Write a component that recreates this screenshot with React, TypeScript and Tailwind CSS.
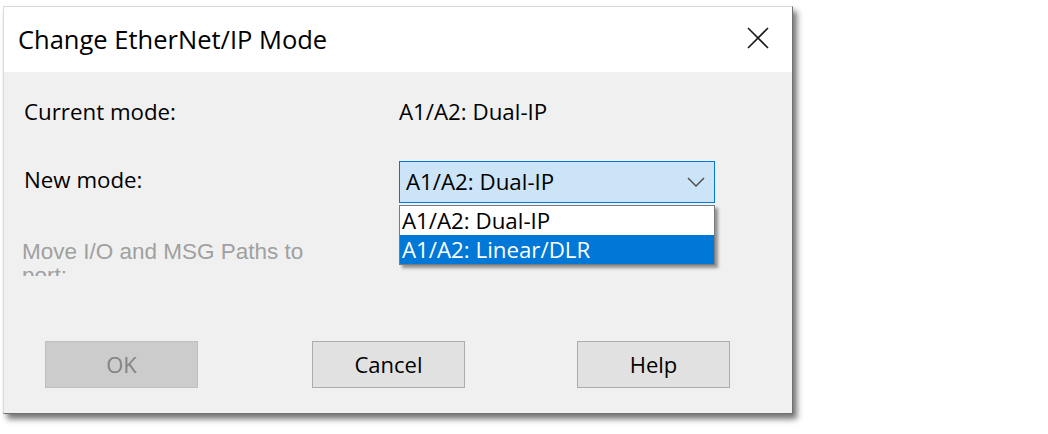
import React from 'react'

// ── Small drawings ──────────────────────────────────────────

function CloseIcon() {
  return (
    <svg width="22" height="22" viewBox="0 0 22 22" className="block -mt-[3px]">
      <path d="M1 1 L21 21 M21 1 L1 21" stroke="#1a1a1a" strokeWidth="1.6" fill="none" />
    </svg>
  )
}

function Chevron() {
  return (
    <svg width="18" height="10" viewBox="0 0 18 10" className="block">
      <path d="M1 1 L9 9 L17 1" stroke="#505050" strokeWidth="1.5" fill="none" />
    </svg>
  )
}

// ── Pieces ──────────────────────────────────────────────────

function DialogButton({ label, disabled }: { label: string; disabled?: boolean }) {
  return (
    <button
      disabled={disabled}
      className={
        disabled
          ? 'w-[153px] h-[47px] border border-[#bfbfbf] bg-[#cccccc] text-[#838383] text-[22px]'
          : 'w-[153px] h-[47px] border border-[#adadad] bg-[#e1e1e1] text-black text-[22px]'
      }
    >
      {label}
    </button>
  )
}

const modes = ['A1/A2: Dual-IP', 'A1/A2: Linear/DLR']

export default function App() {
  return (
    <div className="w-[1048px] h-[434px] bg-white pt-[6px] pl-[3px] overflow-hidden" style={{ fontFamily: '"Open Sans", "Noto Sans", sans-serif' }}>
      <div className="w-[790px] h-[408px] flex flex-col border border-[#d9d9d9] border-r-[#707070] border-b-[#707070] shadow-[4px_5px_6px_rgba(0,0,0,0.55)]">
        {/* title bar */}
        <div className="h-[65px] bg-white flex items-center justify-between pl-[14px] pr-[23px]">
          <span className="text-[25.5px] text-black leading-none">Change EtherNet/IP Mode</span>
          <CloseIcon />
        </div>

        {/* body */}
        <div className="flex-1 bg-[#f0f0f0] pl-[20px] pt-[20px] relative text-[22.3px]">
          <div className="flex items-center h-[40px] text-black">
            <span className="w-[375px]">Current mode:</span>
            <span>A1/A2: Dual-IP</span>
          </div>

          <div className="flex items-center h-[42px] mt-[29px] text-black">
            <span className="w-[375px] -mt-[4px]">New mode:</span>
            <div className="relative">
              <div className="w-[316px] h-[42px] border border-[#0078d7] bg-[#cce4f7] flex items-center justify-between pl-[6px] pr-[9px]">
                <span>A1/A2: Dual-IP</span>
                <Chevron />
              </div>
              {/* open list */}
              <div className="absolute left-0 top-[44px] w-[316px] border border-[#7a7a7a] bg-white shadow-[3px_3px_3px_rgba(0,0,0,0.4)] z-10">
                {modes.map((m, i) => (
                  <div
                    key={m}
                    className={
                      i === 1
                        ? 'h-[29px] flex items-center pl-[2px] bg-[#0078d7] text-white'
                        : 'h-[29px] flex items-center pl-[2px] bg-white text-black'
                    }
                  >
                    {m}
                  </div>
                ))}
              </div>
            </div>
          </div>

          {/* disabled label, clipped like the original control */}
          <div
            className="w-[300px] h-[36px] overflow-hidden mt-[37px] -ml-[2px] text-[22.5px] leading-[24px] text-[#a0a0a0]"
            style={{ fontFamily: '"Liberation Sans", Arial, sans-serif' }}
          >
            Move I/O and MSG Paths to port:
          </div>

          <div className="flex mt-[65px] ml-[21px]">
            <DialogButton label="OK" disabled />
            <div className="ml-[114px]">
              <DialogButton label="Cancel" />
            </div>
            <div className="ml-[112px]">
              <DialogButton label="Help" />
            </div>
          </div>
        </div>
      </div>
    </div>
  )
}
